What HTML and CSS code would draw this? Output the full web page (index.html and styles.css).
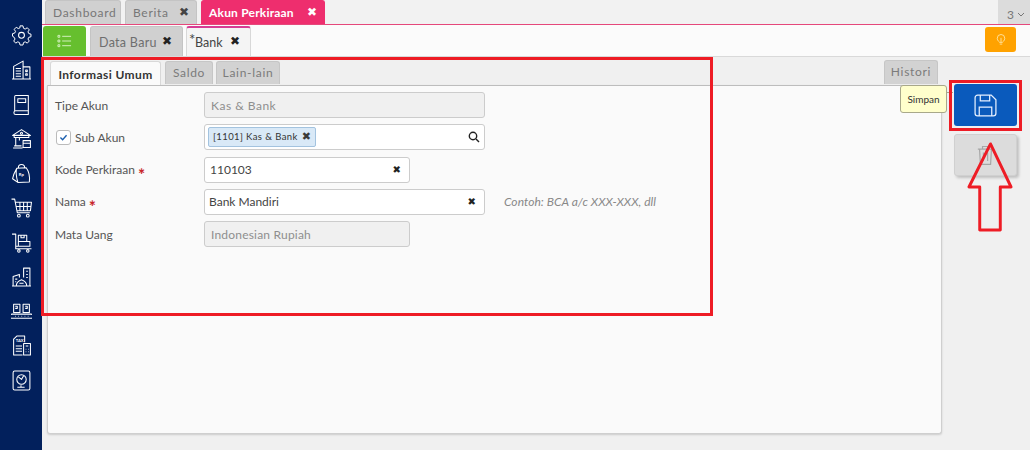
FILE: index.html
```html
<!DOCTYPE html>
<html lang="id">
<head>
<meta charset="utf-8">
<title>Akun Perkiraan</title>
<link rel="stylesheet" href="styles.css">
</head>
<body>
<div class="app">
  <nav class="sidebar">
    <svg class="nav-icon" viewBox="0 0 20 20"><path d="M8.500 1.500h3l.5 2.400 1.700.8 2.100-1.300 2 2.100-1.300 2 .8 1.700 2.200.6v2.600l-2.200.6-.8 1.700 1.300 2-2 2.100-2.100-1.300-1.700.8-.5 2.400h-3l-.5-2.400-1.700-.8-2.100 1.300-2-2.100 1.300-2-.8-1.700L1 11.900V9.300l2.200-.6.8-1.700-1.300-2 2-2.100 2.100 1.300 1.700-.8z" transform="translate(.5 -.6) scale(.95)"/><circle cx="10" cy="9.800" r="2.800"/></svg>
    <svg class="nav-icon" viewBox="0 0 20 20"><path d="M1 19h18M2.500 19V7l9-5v17M11.500 7.500h6.500V19M4.500 9h5M4.500 11.500h5M4.500 14h5M4.500 16.500h5M14 10.500h1.500v1.500H14zM14 14h1.500v1.500H14z"/></svg>
    <svg class="nav-icon" viewBox="0 0 20 20"><path d="M3.500 16V2.500a1 1 0 0 1 1-1h12v14.500h-12a1.700 1.700 0 0 0 0 3.500h12v-3.500M6.500 4.500h7.500v3.500H6.500z"/></svg>
    <svg class="nav-icon" viewBox="0 0 20 20"><path d="M1.500 7L10 1.500 18.500 7zM3 7v2h14V7M4.500 9v8M8 9v3M2 19h9M3 17h7M11.500 12h7v6.500h-7zM11.500 14.500h7"/><circle cx="10" cy="5" r="1"/></svg>
    <svg class="nav-icon" viewBox="0 0 20 20"><path d="M7 4.500c0-4 6-4 6 0M5.500 5l9-.5c2.500 3.500 3.500 9 3 13.500l-11 .5C5 13 4 9 5.500 5zM5.500 5C3.500 8.500 2 12 1.500 15l5 3.500"/><text class="nav-text" x="7.500" y="12.500">Rp</text></svg>
    <svg class="nav-icon" viewBox="0 0 20 20"><path d="M.5 2h3l2.500 13h12M4.500 5h15l-1 8H6M8.500 5v8M12 5v8M15.500 5v8M5 9h14.500"/><circle cx="7.500" cy="17.800" r="1.300"/><circle cx="16" cy="17.800" r="1.300"/></svg>
    <svg class="nav-icon" viewBox="0 0 20 20"><path d="M1 2h3.500v14h15M4.500 13.500H18V9H7M7 9V3h8v6M9.500 3v2.500h3V3M7 13.500V9"/><circle cx="7.500" cy="18" r="1.200"/><circle cx="16" cy="18" r="1.200"/></svg>
    <svg class="nav-icon" viewBox="0 0 20 20"><path d="M1 19h18M2 19v-9l6-2v3M12 11V2h6v17M14.500 5H16M14.500 8H16M14.500 11H16M4 12.500h2M4 15h1M5 19c0-3 2-5 5-6 3 1 5 3 5 6zM8 16.500h4"/></svg>
    <svg class="nav-icon" viewBox="0 0 20 20"><path d="M2.500 3h6v8h-6zM11.500 3h6v8h-6zM1 12.500h18a1 1 0 0 1 0 4H1a1 1 0 0 1 0-4zM4 14.500h.6M7 14.500h.6M10 14.500h.6M13 14.500h.6M16 14.500h.6M4 5h2v2H4M13.500 5h2v2h-2"/></svg>
    <svg class="nav-icon" viewBox="0 0 20 20"><path d="M11 19H2.500V4l3-3H13v6M4.500 10.500h6M4.500 13h6M4.500 15.500h6M12 8h6.500v11H12zM14 10.500h2.500M14 13.500h.6M16.500 13.500h.6M14 16h.6M16.500 16h.6"/><text class="nav-text" x="4.500" y="6.800">TAX</text></svg>
    <svg class="nav-icon" viewBox="0 0 20 20"><path d="M3.500 1h13a1.500 1.500 0 0 1 1.500 1.500v15a1.500 1.500 0 0 1-1.500 1.500h-13A1.500 1.500 0 0 1 2 17.500v-15A1.500 1.500 0 0 1 3.500 1zM6 16.500h7M9.500 16.500v-2"/><circle cx="10" cy="9" r="4.500"/><path d="M7 6.500l3 2.500 2-3.500"/></svg>
  </nav>

  <div class="main">
    <div class="top-tabs">
      <div class="top-tab">Dashboard</div>
      <div class="top-tab tab-berita">Berita <span class="close">✖</span></div>
      <div class="top-tab tab-active">Akun Perkiraan <span class="close">✖</span></div>
      <div class="tab-count">3 <svg class="chev" viewBox="0 0 8 5"><path d="M1 1l3 3 3-3"/></svg></div>
    </div>

    <div class="sub-tabs">
      <button class="list-btn" type="button">
        <svg viewBox="0 0 16 14"><path d="M5.500 2H15M5.500 7H15M5.500 12H15M1 1h2v2H1zM1 6h2v2H1zM1 11h2v2H1z"/></svg>
      </button>
      <div class="sub-tab tab-data">Data Baru <span class="close dark">✖</span></div>
      <div class="sub-tab tab-bank"><span class="bank-title"><span class="star">*</span>Bank</span> <span class="close dark">✖</span></div>
      <button class="lamp-btn" type="button">
        <svg viewBox="0 0 12 14"><path d="M4.500 10.500C2 8.500 1.500 6.800 1.500 5.500a4.500 4.500 0 0 1 9 0c0 1.300-.5 3-3 5zM4.500 12.500h3M6 5v5"/></svg>
      </button>
    </div>

    <div class="body">
      <section class="workspace">
        <div class="form-tabs">
          <div class="form-tab form-tab-active">Informasi Umum</div>
          <div class="form-tab tab-saldo">Saldo</div>
          <div class="form-tab tab-lain">Lain-lain</div>
          <div class="form-tab tab-histori">Histori</div>
        </div>
        <div class="panel">
          <div class="row">
            <label class="label">Tipe Akun</label>
            <div class="field field-wide field-off">Kas &amp; Bank</div>
          </div>
          <div class="row">
            <label class="label label-check"><span class="check"><svg viewBox="0 0 10 8"><path d="M1.500 4l2.500 2.500L8.500 1.500"/></svg></span>Sub Akun</label>
            <div class="field field-wide field-chip">
              <span class="chip">[1101] Kas &amp; Bank <span class="chip-x">✖</span></span>
              <svg class="search" viewBox="0 0 12 12"><circle cx="5" cy="5" r="3.700"/><path d="M8 8l3 3"/></svg>
            </div>
          </div>
          <div class="row">
            <label class="label">Kode Perkiraan <span class="req">∗</span></label>
            <div class="field field-mid">110103<span class="clear">✖</span></div>
          </div>
          <div class="row">
            <label class="label">Nama <span class="req">∗</span></label>
            <div class="field field-wide field-name">Bank Mandiri<span class="clear">✖</span></div>
            <span class="hint">Contoh: BCA a/c XXX-XXX, dll</span>
          </div>
          <div class="row">
            <label class="label">Mata Uang</label>
            <div class="field field-mid field-off field-currency">Indonesian Rupiah</div>
          </div>
        </div>
      </section>

      <aside class="actions">
        <div class="tooltip">Simpan</div>
        <button class="action action-save" type="button">
          <svg viewBox="0 0 24 24"><path d="M4.500 2h13l4.500 4.500V19.500a2.500 2.500 0 0 1-2.500 2.500h-15A2.500 2.500 0 0 1 2 19.500v-15A2.500 2.500 0 0 1 4.500 2zM7 2v5.500h9V2M6 22v-8.500h12V22"/></svg>
        </button>
        <button class="action action-del" type="button">
          <svg viewBox="0 0 20 24"><path d="M1 5h18M6.500 5V2h7v3M3 5l1 18h12l1-18M7.500 9v10M12.500 9v10"/></svg>
        </button>
      </aside>
    </div>
  </div>
</div>

<div class="mark mark-form"></div>
<div class="mark mark-save"></div>
<svg class="mark-arrow" viewBox="0 0 48 92"><path d="M24 2L45 46H34V90H13V46H2z"/></svg>
</body>
</html>
```
FILE: styles.css
```css
* { box-sizing: border-box; }
html, body { margin: 0; height: 100%; }
body {
  position: relative;
  width: 1030px;
  height: 450px;
  overflow: hidden;
  font-family: Lato, "Open Sans", sans-serif;
  font-size: 12px;
  color: #444;
  background: #f0f0f0;
}
button { border: 0; padding: 0; font: inherit; }

.app { display: flex; height: 450px; }

.sidebar {
  flex: 0 0 42px;
  background: #02205c;
  display: flex;
  flex-direction: column;
  align-items: center;
  padding: 24.500px 0 0;
  gap: 13.500px;
}
.nav-icon {
  width: 21px;
  height: 21px;
  fill: none;
  stroke: #fff;
  stroke-width: 1;
  stroke-linejoin: round;
  flex: none;
}
.nav-text { font-size: 4px; font-weight: 700; fill: #fff; stroke: none; }

.main { flex: 1; display: flex; flex-direction: column; min-width: 0; }

.top-tabs {
  height: 25px;
  display: flex;
  gap: 4px;
  padding-left: 3px;
  background: #f2f2f2;
  border-bottom: 1px solid #e5487b;
}
.top-tab {
  height: 24px;
  padding: 4px 0 0 7px;
  background: #d0d0d0;
  border: 1px solid #c4c4c4;
  border-bottom: 0;
  border-radius: 3px 3px 0 0;
  color: #777;
  letter-spacing: .7px;
  white-space: nowrap;
  width: 76px;
  line-height: 15px;
  display: flex;
  justify-content: space-between;
}
.tab-berita { width: 72px; }
.tab-active {
  width: 124px;
  background: #ee2e6e;
  border-color: #ee2e6e;
  color: #fff;
  font-weight: 700;
  letter-spacing: .2px;
}
.close { font-size: 12px; padding-right: 7px; font-family: "DejaVu Sans", sans-serif; color: #444; line-height: 15px; letter-spacing: 0; }
.tab-active .close { color: #fff; }
.close.dark { color: #222; padding: 0; }
.tab-count {
  margin-left: auto;
  width: 32px;
  height: 24px;
  background: #dcdcdc;
  color: #777;
  padding: 4px 0 0 9px;
  line-height: 15px;
  display: flex;
  align-items: center;
  gap: 3px;
}
.chev { width: 8px; height: 5px; fill: none; stroke: #777; }

.sub-tabs {
  height: 32px;
  flex: none;
  display: flex;
  align-items: flex-end;
  gap: 4px;
  padding-left: 1px;
  background: #fbfbfb;
  border-bottom: 1px solid #d9d9d9;
}
.list-btn {
  width: 43px;
  height: 30px;
  background: #66bf2e;
  border-radius: 3px 3px 0 0;
  display: flex;
  align-items: center;
  justify-content: center;
}
.list-btn svg { width: 15px; height: 14px; fill: none; stroke: #d8f2c4; }
.sub-tab {
  height: 30px;
  border: 1px solid #c4c4c4;
  border-bottom: 0;
  border-radius: 3px 3px 0 0;
  background: #d0d0d0;
  color: #6e6e6e;
  font-size: 12.500px;
  letter-spacing: .3px;
  padding: 7px 10px 0 8px;
  line-height: 17px;
  display: flex;
  justify-content: space-between;
  white-space: nowrap;
}
.tab-data { width: 93px; }
.tab-bank {
  width: 65px;
  margin-left: -1px;
  background: #f4f4f4;
  border-color: #d8d8d8;
  border-top: 2px solid #d63c94;
  color: #444;
  padding: 6px 10px 0 2px;
  letter-spacing: 0;
}
.bank-title { display: flex; }
.star { font-size: 15px; line-height: 11px; width: 6px; }
.lamp-btn {
  width: 31px;
  height: 25px;
  margin: 0 14px 4px auto;
  background: #ffa200;
  border-radius: 3px;
  display: flex;
  align-items: center;
  justify-content: center;
}
.lamp-btn svg { width: 10px; height: 13px; fill: none; stroke: #ffe9b0; }

.body { flex: 1; display: flex; min-height: 0; padding: 4px 0 16px 5px; }

.workspace { width: 895px; display: flex; flex-direction: column; }

.form-tabs {
  height: 24px;
  flex: none;
  display: flex;
  align-items: flex-end;
  gap: 4px;
  padding-left: 3px;
  position: relative;
  z-index: 1;
}
.form-tab {
  height: 23px;
  padding-top: 3px;
  line-height: 15px;
  background: #d2d2d2;
  border: 1px solid #c6c6c6;
  border-bottom: 0;
  border-radius: 3px 3px 0 0;
  color: #7b7b7b;
  text-align: center;
  letter-spacing: .7px;
  margin-bottom: 1px;
}
.form-tab-active {
  width: 111px;
  height: 24px;
  margin-bottom: 0;
  padding-top: 5px;
  background: #fafafa;
  border-color: #d8d8d8;
  color: #333;
  font-weight: 700;
  letter-spacing: .4px;
}
.tab-saldo { width: 48px; }
.tab-lain { width: 64px; margin-left: -1px; }
.tab-histori { width: 54px; height: 24px; margin-left: auto; margin-right: 4px; }

.panel {
  flex: 1;
  background: #fafafa;
  border: 1px solid #cfcfcf;
  border-top-color: #bdbdbd;
  border-radius: 0 0 3px 3px;
  box-shadow: 0 1px 2px rgba(0,0,0,.15);
  padding: 6px 0 0 7px;
  display: flex;
  flex-direction: column;
  gap: 6.250px;
}
.row { display: flex; align-items: center; height: 26px; flex: none; }
.label {
  width: 149px;
  flex: none;
  color: #555;
  white-space: nowrap;
}
.label-check { display: flex; align-items: center; gap: 4px; margin-left: 1px; width: 148px; }
.check {
  width: 15px;
  height: 15px;
  background: #fff;
  border: 1px solid #bbb;
  border-radius: 3px;
  display: flex;
  align-items: center;
  justify-content: center;
}
.check svg { width: 9px; height: 7px; fill: none; stroke: #1c5fae; stroke-width: 1.600; }
.req { color: #c8262c; font-family: "DejaVu Sans", sans-serif; font-size: 9px; font-weight: 700; }

.field {
  height: 26px;
  background: #fff;
  border: 1px solid #cccccc;
  border-radius: 3px;
  padding: 0 5px;
  display: flex;
  align-items: center;
  color: #444;
  position: relative;
  white-space: nowrap;
}
.field-wide { width: 281px; }
.field-mid { width: 206px; }
.field-off { background: #f0f0f0; color: #8e8e8e; letter-spacing: .5px; padding-left: 6px; }
.field-currency { letter-spacing: .2px; }
.field-name { padding-left: 4px; }
.field-chip { padding-left: 3px; justify-content: space-between; padding-right: 4px; }
.chip {
  height: 20px;
  background: #d9e9f7;
  border: 1px solid #a3c3df;
  border-radius: 2px;
  padding: 0 4px;
  font-size: 9.500px;
  letter-spacing: .4px;
  line-height: 18px;
  color: #333;
  display: flex;
  gap: 4px;
}
.chip-x { font-family: "DejaVu Sans", sans-serif; font-size: 11px; color: #3a3a3a; }
.search { width: 12px; height: 12px; fill: none; stroke: #222; stroke-width: 1.400; }
.clear {
  margin-left: auto;
  padding-right: 3px;
  font-family: "DejaVu Sans", sans-serif;
  font-size: 10px;
  color: #222;
}
.hint { margin-left: 19px; font-style: italic; font-size: 12px; color: #888; letter-spacing: .05px; white-space: nowrap; }

.actions {
  flex: 1;
  position: relative;
  display: flex;
  flex-direction: column;
  align-items: flex-start;
  padding: 23px 0 0 12px;
  gap: 8px;
}
.action {
  width: 63px;
  height: 42px;
  border-radius: 3px;
  display: flex;
  align-items: center;
  justify-content: center;
}
.action-save { background: #0a5abc; }
.action-save svg { width: 25px; height: 25px; fill: none; stroke: #e6f0ff; stroke-width: 1.200; }
.action-del { background: #dcdcdc; box-shadow: 2px 2px 3px rgba(0,0,0,.2); border: 1px solid #d0d0d0; }
.action-del svg { width: 17px; height: 22px; fill: none; stroke: #a6a6a6; stroke-width: 1.400; }
.tooltip {
  position: absolute;
  left: -42px;
  top: 24px;
  width: 47px;
  height: 28px;
  background: #ffffcc;
  border: 1px solid #a8a88a;
  border-radius: 3px;
  font-size: 10px;
  line-height: 26px;
  text-align: center;
  color: #333;
}
.tooltip::after {
  content: "";
  position: absolute;
  left: 100%;
  top: 6px;
  width: 7px;
  height: 1px;
  background: #a8a88a;
}

.mark { position: absolute; border: 3px solid #ee1c25; pointer-events: none; }
.mark-form { left: 41px; top: 57px; width: 672px; height: 259px; }
.mark-save { left: 949px; top: 80px; width: 73px; height: 51px; }
.mark-arrow {
  position: absolute;
  left: 967px;
  top: 141px;
  width: 47px;
  height: 92px;
  fill: none;
  stroke: #ee1c25;
  stroke-width: 3;
  stroke-linejoin: round;
}
```
